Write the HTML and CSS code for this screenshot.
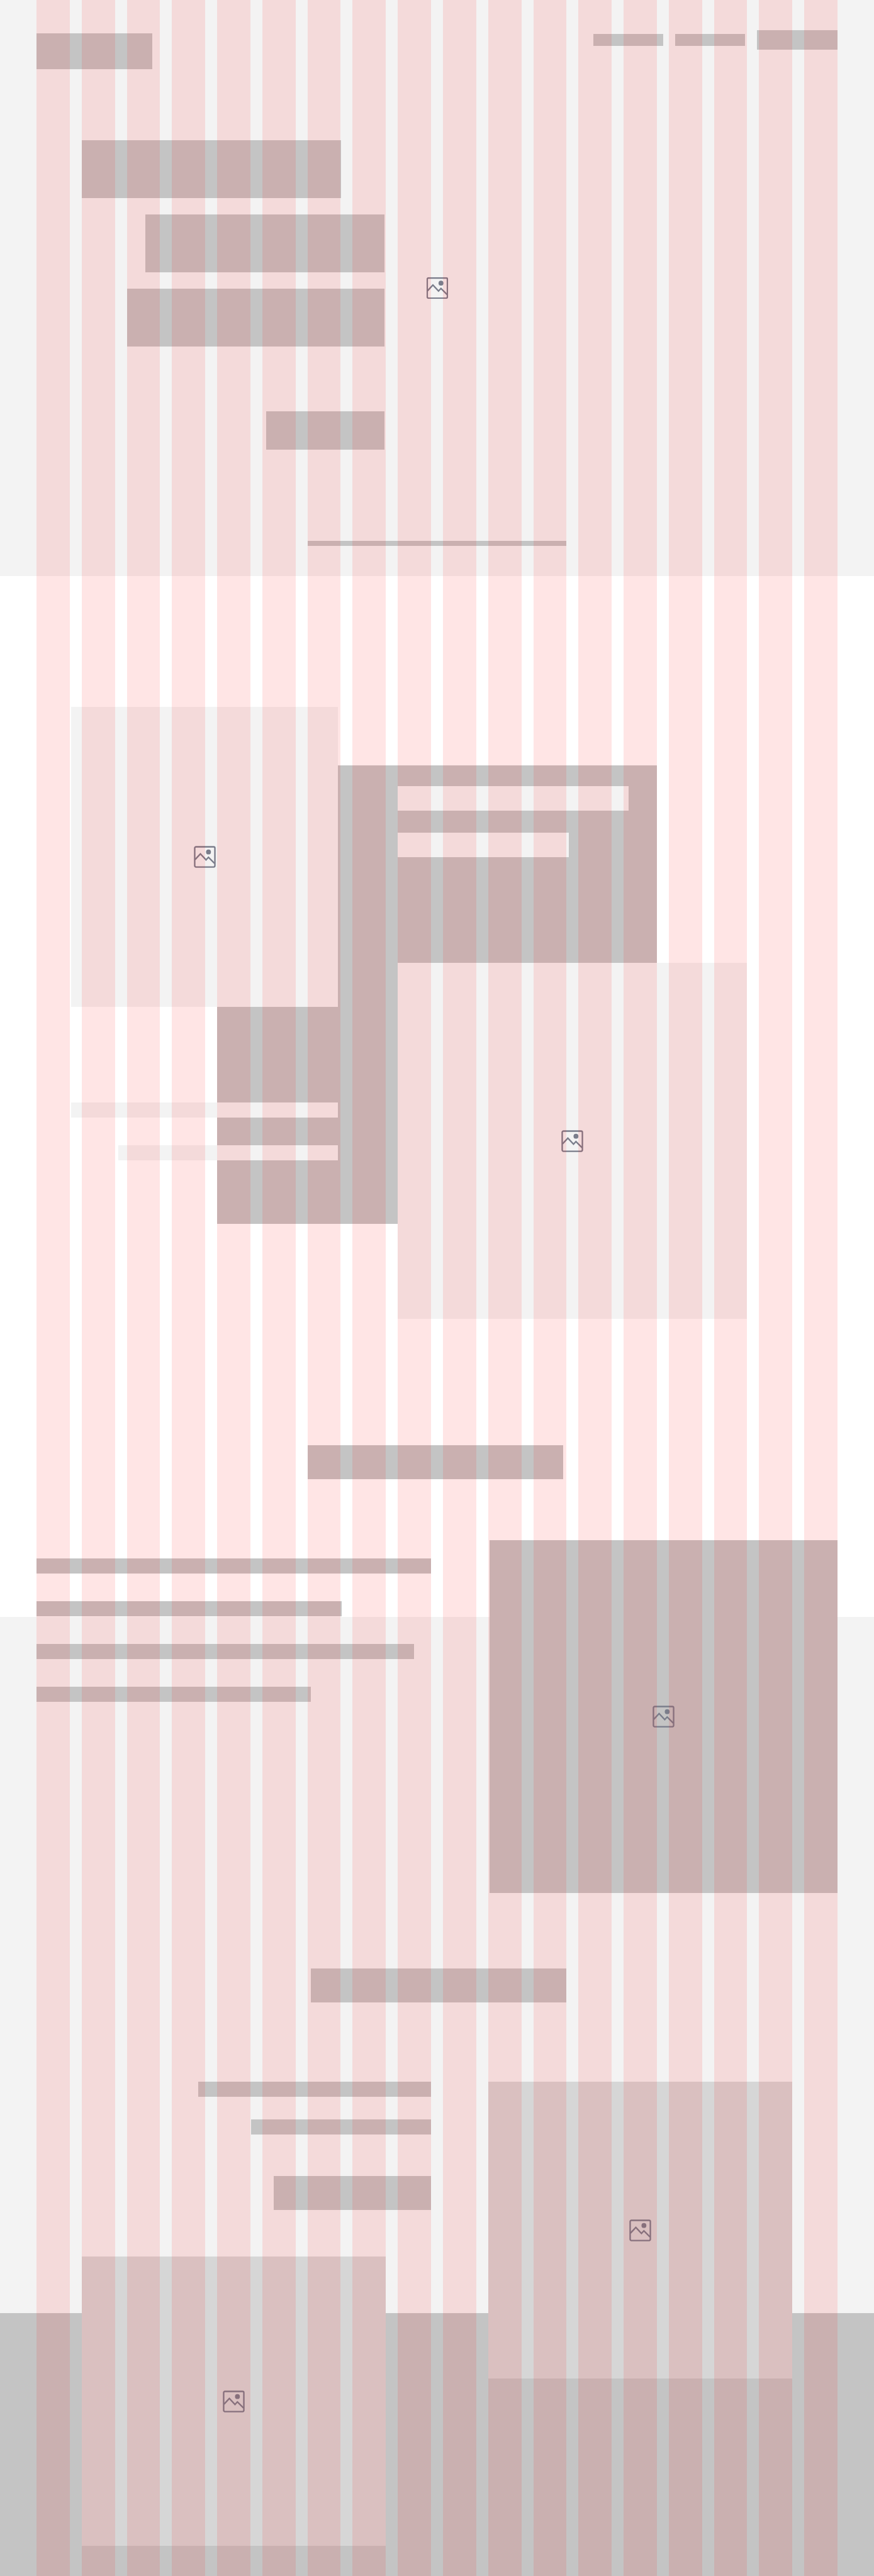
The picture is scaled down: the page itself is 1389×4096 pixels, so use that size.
FILE: index.html
```html
<!DOCTYPE html>
<html lang="en">
<head>
  <meta charset="utf-8">
  <meta name="viewport" content="width=device-width, initial-scale=1">
  <title>Landing page wireframe</title>
  <link rel="stylesheet" href="styles.css">
</head>
<body>
  <svg class="sprite" aria-hidden="true">
    <symbol id="image" viewBox="0 0 36 36">
      <rect x="1.5" y="1.5" width="33" height="33" rx="2" fill="none" stroke="currentColor" stroke-width="2.4"/>
      <path d="M2 22.5 10.8 13 20 23l4-4.4 10 10" fill="none" stroke="currentColor" stroke-width="2.4"/>
      <circle cx="24" cy="10" r="4" fill="currentColor"/>
    </symbol>
  </svg>

  <div class="page">
    <section class="hero">
      <header class="header">
        <a class="block logo" href="#" aria-label="Home"></a>
        <nav class="nav" aria-label="Main">
          <a class="block nav-link" href="#about" aria-label="About"></a>
          <a class="block nav-link" href="#story" aria-label="Story"></a>
          <button class="block nav-button" type="button" aria-label="Contact"></button>
        </nav>
      </header>
      <div class="hero-text">
        <div class="block title title-1"></div>
        <div class="block title title-2"></div>
        <div class="block title title-3"></div>
        <button class="block hero-button" type="button" aria-label="Start"></button>
      </div>
      <div class="columns">
        <div class="block hero-rule"></div>
      </div>
      <svg class="icon hero-icon" aria-hidden="true"><use href="#image"/></svg>
    </section>

    <section class="about" id="about">
      <div class="collage">
        <div class="block panel"></div>
        <div class="picture light picture-a"><svg class="icon" aria-hidden="true"><use href="#image"/></svg></div>
        <div class="picture light picture-b"><svg class="icon" aria-hidden="true"><use href="#image"/></svg></div>
        <div class="heading-lines">
          <div class="light heading-1"></div>
          <div class="light heading-2"></div>
        </div>
        <div class="caption-lines">
          <div class="light line caption-1"></div>
          <div class="light line caption-2"></div>
        </div>
      </div>
    </section>

    <section class="story" id="story">
      <div class="columns">
        <div class="block subtitle subtitle-left"></div>
      </div>
      <div class="split">
        <div class="story-lines">
          <div class="block line story-1"></div>
          <div class="block line story-2"></div>
          <div class="block line story-3"></div>
          <div class="block line story-4"></div>
        </div>
        <div class="block picture picture-c"><svg class="icon" aria-hidden="true"><use href="#image"/></svg></div>
      </div>
    </section>

    <section class="gallery">
      <div class="columns">
        <div class="block subtitle subtitle-right"></div>
      </div>
      <div class="columns gallery-grid">
        <div class="gallery-text">
          <div class="block line gallery-1"></div>
          <div class="block line gallery-2"></div>
          <button class="block gallery-button" type="button" aria-label="See more"></button>
        </div>
        <div class="picture medium picture-d"><svg class="icon" aria-hidden="true"><use href="#image"/></svg></div>
        <div class="picture medium picture-e"><svg class="icon" aria-hidden="true"><use href="#image"/></svg></div>
      </div>
    </section>

    <div class="columns guides" aria-hidden="true">
      <i></i><i></i><i></i><i></i><i></i><i></i><i></i><i></i><i></i>
      <i></i><i></i><i></i><i></i><i></i><i></i><i></i><i></i><i></i>
    </div>
  </div>
</body>
</html>
```

FILE: styles.css
```css
:root {
  --light: #f3f3f3;
  --medium: #d6d6d6;
  --dark: #c4c4c4;
  --margin: 58px;
  --gutter: 19px;
}

* { box-sizing: border-box; }

body {
  margin: 0;
  background: var(--light);
  font-family: "Liberation Sans", Arial, sans-serif;
}

.page { position: relative; }

.sprite {
  position: absolute;
  width: 0;
  height: 0;
}

button {
  padding: 0;
  border: 0;
  border-radius: 0;
}

.block { display: block; background: var(--dark); }
.light { background: var(--light); }
.medium { background: var(--medium); }
.line { height: 24px; }

.icon {
  display: block;
  width: 35px;
  height: 35px;
  color: #7a7d8b;
}

.picture {
  display: flex;
  align-items: center;
  justify-content: center;
}

/* 18-column grid shared by every section */
.columns {
  display: grid;
  grid-template-columns: repeat(18, 1fr);
  column-gap: var(--gutter);
}

/* Column guides drawn over the page */
.guides {
  position: absolute;
  inset: 0;
  padding: 0 var(--margin);
  pointer-events: none;
}
.guides i { background: rgba(255, 0, 0, 0.1); }

/* Hero */
.hero {
  position: relative;
  padding: 48px var(--margin);
  background: var(--light);
}
.header {
  display: flex;
  align-items: flex-start;
  justify-content: space-between;
}
.logo {
  width: 184px;
  height: 57px;
  margin-top: 5px;
}
.nav {
  display: flex;
  align-items: center;
  gap: 19px;
}
.nav-link { width: 111px; height: 19px; }
.nav-button { width: 128px; height: 31px; }

.hero-text {
  display: flex;
  flex-direction: column;
  align-items: flex-end;
  gap: 26px;
  width: 481px;
  margin: 113px 0 145px 72px;
}
.title { height: 92px; }
.title-1 { width: 412px; align-self: flex-start; }
.title-2 { width: 380px; }
.title-3 { width: 409px; }
.hero-button {
  width: 188px;
  height: 61px;
  margin-top: 77px;
}
.hero-rule {
  grid-column: 7 / span 6;
  height: 8px;
}
.hero-icon {
  position: absolute;
  top: 50%;
  left: 50%;
  transform: translate(-50%, -50%);
}

/* About */
.about {
  padding: 208px var(--margin) 0;
  background: #fff;
}
.collage {
  display: grid;
  grid-template-columns: 55fr 232fr 192fr 95fr 412fr 143fr 144fr;
  grid-template-rows: 93px 314px 70px 345px 151px;
}
.panel { grid-area: 2 / 3 / 5 / 6; }
.picture-a { grid-area: 1 / 2 / 4 / 4; }
.picture-b { grid-area: 3 / 5 / 6 / 7; }
.heading-lines {
  grid-area: 2 / 5 / 3 / 6;
  display: flex;
  flex-direction: column;
  gap: 35px;
  padding-top: 33px;
}
.heading-1, .heading-2 { height: 39px; }
.heading-1 { width: 367px; }
.heading-2 { width: 272px; }
.caption-lines {
  grid-area: 4 / 2 / 5 / 4;
  display: flex;
  flex-direction: column;
  align-items: flex-end;
  gap: 44px;
  padding-top: 152px;
}
.caption-1 { width: 100%; }
.caption-2 { width: 349px; }

/* Story */
.story {
  padding: 201px var(--margin) 0;
  background: linear-gradient(#fff 474px, var(--light) 474px);
}
.subtitle {
  grid-column: 7 / span 6;
  width: 406px;
  height: 54px;
}
.subtitle-right { justify-self: end; }
.split {
  display: grid;
  grid-template-columns: 720fr 553fr;
  margin-top: 97px;
}
.story-lines {
  display: flex;
  flex-direction: column;
  gap: 44px;
  padding-top: 29px;
}
.story-1 { width: 627px; }
.story-2 { width: 485px; }
.story-3 { width: 600px; }
.story-4 { width: 436px; }
.picture-c { display: flex; height: 561px; }

/* Gallery, with a dark band along its foot */
.gallery {
  padding: 120px var(--margin) 48px;
  background: linear-gradient(to top, var(--dark) 418px, var(--light) 418px);
}
.gallery-grid {
  row-gap: 74px;
  margin-top: 126px;
}
.gallery-text {
  grid-area: 1 / 1 / 2 / 10;
  display: flex;
  flex-direction: column;
  align-items: flex-end;
  gap: 36px;
}
.gallery-1 { width: 370px; }
.gallery-2 { width: 286px; }
.gallery-button {
  width: 250px;
  height: 54px;
  margin-top: 30px;
}
.picture-d {
  grid-area: 2 / 2 / 3 / 9;
  height: 460px;
}
.picture-e {
  grid-area: 1 / 11 / 3 / 18;
  height: 472px;
}
```
